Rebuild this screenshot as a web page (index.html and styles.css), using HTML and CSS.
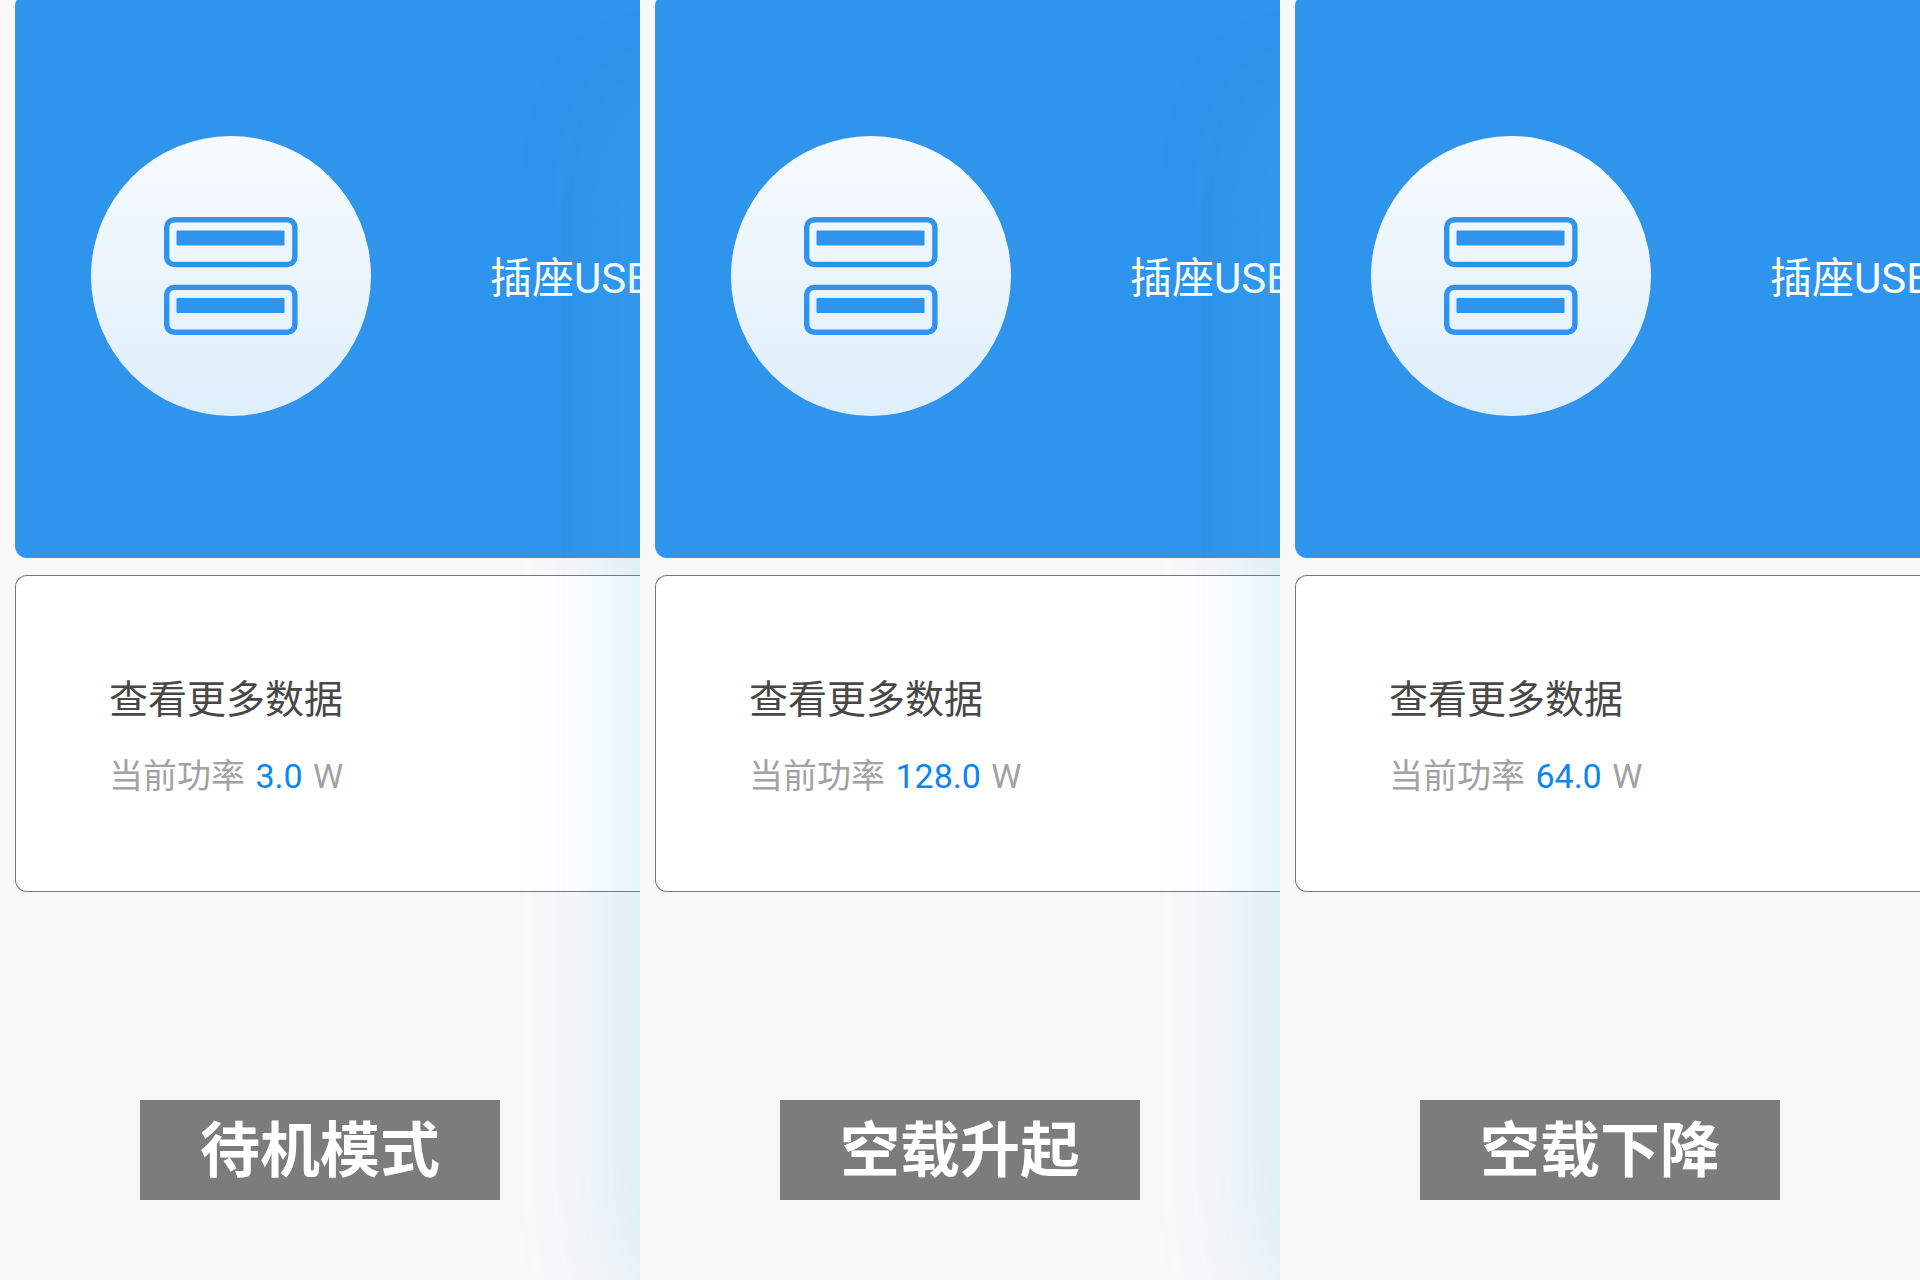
FILE: index.html
```html
<!doctype html>
<html lang="zh-CN">
<head>
<meta charset="utf-8">
<title>插座USB</title>
<link rel="stylesheet" href="styles.css">
</head>
<body>
<svg class="defs" width="0" height="0">
	<symbol id="usb" viewBox="0 0 134 118">
		<g fill="none" stroke="#2f94eb" stroke-width="5.4">
			<rect x="2.7" y="2.7" width="128.2" height="44.8" rx="7.5"/>
			<rect x="2.7" y="70.4" width="128.2" height="44.8" rx="7.5"/>
		</g>
		<g fill="#2f94eb">
			<rect x="12.5" y="13.5" width="108" height="15" rx="1"/>
			<rect x="12.5" y="81" width="108" height="15" rx="1"/>
		</g>
	</symbol>
</svg>
<main class="panels">
	<section class="panel glow">
		<div class="socket">
			<div class="circle"><svg class="usb"><use href="#usb"/></svg></div>
			<h2>插座USB</h2>
		</div>
		<a class="data" href="#">
			<span class="more">查看更多数据</span>
			<span class="power">当前功率 <b>3.0</b> W</span>
		</a>
		<p class="caption">待机模式</p>
	</section>
	<section class="panel glow">
		<div class="socket">
			<div class="circle"><svg class="usb"><use href="#usb"/></svg></div>
			<h2>插座USB</h2>
		</div>
		<a class="data" href="#">
			<span class="more">查看更多数据</span>
			<span class="power">当前功率 <b>128.0</b> W</span>
		</a>
		<p class="caption">空载升起</p>
	</section>
	<section class="panel">
		<div class="socket">
			<div class="circle"><svg class="usb"><use href="#usb"/></svg></div>
			<h2>插座USB</h2>
		</div>
		<a class="data" href="#">
			<span class="more">查看更多数据</span>
			<span class="power">当前功率 <b>64.0</b> W</span>
		</a>
		<p class="caption">空载下降</p>
	</section>
</main>
</body>
</html>
```

FILE: styles.css
```css
*{
	box-sizing:border-box;
}
body{
	margin:0;
	background:#f8f8f8;
	font-family:Roboto,"Noto Sans CJK SC",sans-serif;
}
.defs{
	position:absolute;
}
.panels{
	display:grid;
	grid-template-columns:repeat(3,minmax(0,1fr));
	min-height:100vh;
}
.panel{
	position:relative;
	overflow:hidden;
	padding-left:15px;
	padding-bottom:60px;
}
/* light coming in from the right side of the panel */
.glow::after{
	content:"";
	position:absolute;
	left:100%;
	top:120px;
	bottom:0;
	width:200px;
	box-shadow:0 0 110px 10px rgba(60,185,240,.23);
	pointer-events:none;
}
.socket{
	display:flex;
	align-items:center;
	gap:119px;
	height:564px;
	margin-top:-6px;
	padding-left:76px;
	border-radius:12px 0 0 12px;
	background:#2f94eb;
}
.circle{
	display:flex;
	flex:none;
	align-items:center;
	justify-content:center;
	width:280px;
	height:280px;
	border-radius:50%;
	background:linear-gradient(#f7fbff,#deeefb);
}
.usb{
	width:134px;
	height:118px;
}
h2{
	margin:0;
	padding-top:5px;
	color:#fff;
	font-size:42px;
	font-weight:400;
	line-height:60px;
	white-space:nowrap;
}
.data{
	display:flex;
	flex-direction:column;
	justify-content:center;
	gap:20px;
	height:317px;
	margin-top:17px;
	padding-top:8px;
	padding-left:93px;
	border:1px solid #777;
	border-right:0;
	border-radius:12px 0 0 12px;
	background:#fff;
	text-decoration:none;
	white-space:nowrap;
}
.more{
	color:#484848;
	font-size:39px;
	line-height:56px;
}
.power{
	color:#a2a2a2;
	font-size:34px;
	line-height:56px;
}
.power b{
	margin:0 2px;
	color:#0a87ee;
	font-weight:400;
}
.caption{
	width:360px;
	max-width:100%;
	margin:208px auto 0 125px;
	padding-top:4px;
	background:#7c7c7c;
	color:#fff;
	font-size:60px;
	font-weight:700;
	line-height:96px;
	text-align:center;
}
```
